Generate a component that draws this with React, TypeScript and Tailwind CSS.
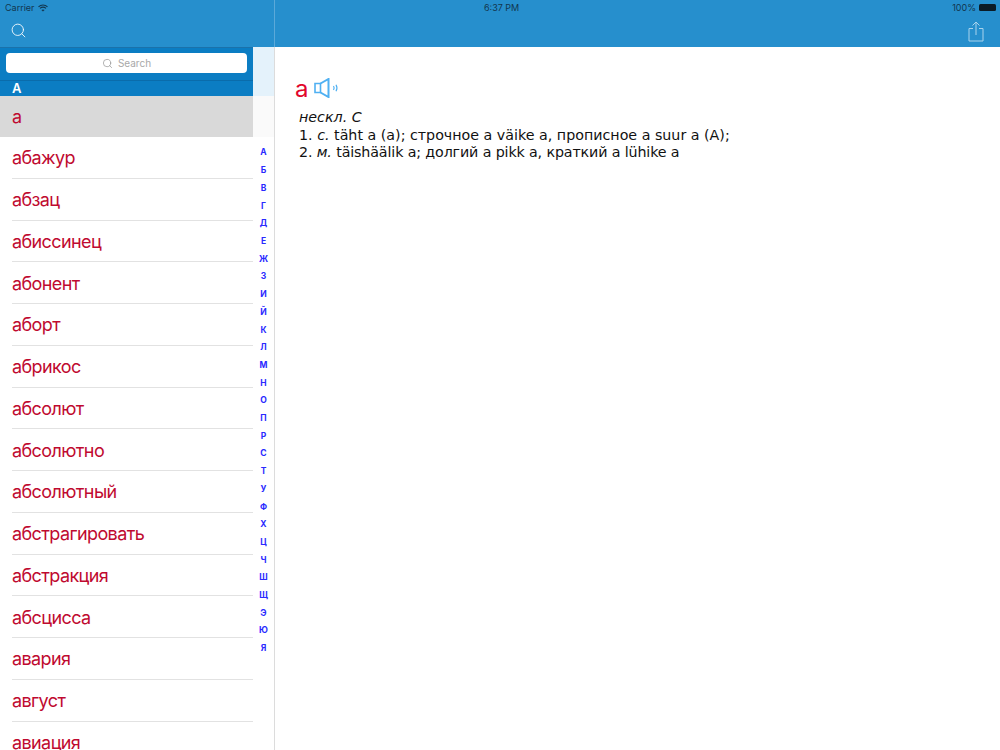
import { Search } from 'lucide-react';

const words = [
  'абажур',
  'абзац',
  'абиссинец',
  'абонент',
  'аборт',
  'абрикос',
  'абсолют',
  'абсолютно',
  'абсолютный',
  'абстрагировать',
  'абстракция',
  'абсцисса',
  'авария',
  'август',
  'авиация',
];

const letters = 'АБВГДЕЖЗИЙКЛМНОПРСТУФХЦЧШЩЭЮЯ'.split('');

function ShareIcon() {
  return (
    <svg width="16" height="21" viewBox="0 0 16 21" fill="none" stroke="#a9d3ec" strokeWidth="1">
      <path d="M5 7.5H1V20H15V7.5H11" />
      <path d="M8 14V1M4.5 4.5L8 1L11.5 4.5" />
    </svg>
  );
}

function SpeakerIcon() {
  return (
    <svg width="26" height="20" viewBox="0 0 26 20" fill="none" stroke="#4fb0f2">
      <path d="M1 5.5H6.5V14.5H1Z" strokeWidth="1.6" />
      <path d="M6.5 5.5L14.5 1V19L6.5 14.5" strokeWidth="2" />
      <path d="M19.5 8C20.3 9.2 20.3 10.8 19.5 12" strokeWidth="1.2" />
      <path d="M22 6.8C23.2 8.8 23.2 11.2 22 13.2" strokeWidth="1.2" />
    </svg>
  );
}

function WifiIcon() {
  return (
    <svg width="10" height="8" viewBox="0 0 10 8" fill="none" stroke="#12364f" strokeWidth="1.1">
      <path d="M0.5 2.8C3 0.4 7 0.4 9.5 2.8" />
      <path d="M2 4.4C3.7 2.9 6.3 2.9 8 4.4" />
      <path d="M5 7.6L3.4 5.9C4.3 5.2 5.7 5.2 6.6 5.9Z" fill="#12364f" stroke="none" />
    </svg>
  );
}

export default function App() {
  return (
    <div className="flex h-[750px] w-[1000px] flex-col overflow-hidden bg-white font-['Inter',sans-serif]">
      <header className="flex h-[47px] shrink-0 bg-[#268fcd]">
        <div className="flex w-[275px] shrink-0 flex-col border-r border-[#5ba9d9]">
          <div className="flex h-[15px] items-center gap-[3px] pl-[5px] text-[9px] text-[#12364f]">
            Carrier
            <WifiIcon />
          </div>
          <div className="pl-[10px] pt-[7px]">
            <Search size={17} strokeWidth={1.2} className="text-white" />
          </div>
        </div>
        <div className="flex flex-1 flex-col">
          <div className="relative flex h-[15px] items-center justify-end gap-[3px] pr-[4px] text-[9px] text-[#12364f]">
            <span className="absolute left-[209px]">6:37 PM</span>
            100%
            <span className="h-[7px] w-[17px] rounded-[1.5px] bg-[#0b1b26]" />
          </div>
          <div className="flex justify-end pr-[16px] pt-[6px]">
            <ShareIcon />
          </div>
        </div>
      </header>

      <div className="flex min-h-0 flex-1">
        <aside className="flex w-[275px] shrink-0 border-r border-[#dcdcdc]">
          <div className="w-[253px] shrink-0">
            <div className="flex h-[33px] items-center border-t border-[#1a72ab] bg-[#0b7dc3] px-[6px] pb-[2px]">
              <div className="flex h-[20px] w-full items-center justify-center gap-[5px] rounded-[4px] bg-white text-[10px] text-[#a8a8a8]">
                <Search size={11} strokeWidth={1.4} className="text-[#8c8c8c]" />
                Search
              </div>
            </div>
            <div className="flex h-[16px] items-center border-t border-[#0a6cab] bg-[#0b7dc3] pl-[12px] text-[13px] font-semibold text-white">
              А
            </div>
            <div className="flex h-[41px] items-center bg-[#d9d9d9] pb-[1px] pl-[12px] text-[18px] tracking-[-0.6px] text-[#bf0a30]">
              а
            </div>
            {words.map((word) => (
              <div key={word} className="h-[41.75px] pl-[12px]">
                <div className="flex h-full items-center border-b border-[#e2e2e2] pt-[1px] text-[18px] tracking-[-0.6px] text-[#bf0a30]">
                  {word}
                </div>
              </div>
            ))}
          </div>
          <div className="flex flex-1 flex-col">
            <div className="h-[49px] shrink-0 bg-[#e4f2fb]" />
            <div className="h-[41px] shrink-0 bg-[#fafafa]" />
            <div className="flex flex-col items-center pt-[7px]">
              {letters.map((letter) => (
                <div key={letter} className="flex h-[17.71px] items-center text-[8.5px] font-bold text-[#2a2aff]">
                  {letter}
                </div>
              ))}
            </div>
          </div>
        </aside>

        <main className="flex-1 pl-[20px] pt-[29px]">
          <div className="flex h-[24px] items-center gap-[6px]">
            <span className="pt-[1px] text-[24px] leading-none text-[#e2062c]">а</span>
            <SpeakerIcon />
          </div>
          <div className="ml-[4px] mt-[9px] font-['DejaVu_Sans',sans-serif] text-[14.25px] leading-[17.5px] text-[#111]">
            <div className="italic">нескл. С</div>
            <div>
              1. <i>с.</i> täht а (а); строчное а väike а, прописное а suur а (А);
            </div>
            <div className="tracking-[-0.13px]">
              2. <i>м.</i> täishäälik а; долгий а pikk а, краткий а lühike а
            </div>
          </div>
        </main>
      </div>
    </div>
  );
}
